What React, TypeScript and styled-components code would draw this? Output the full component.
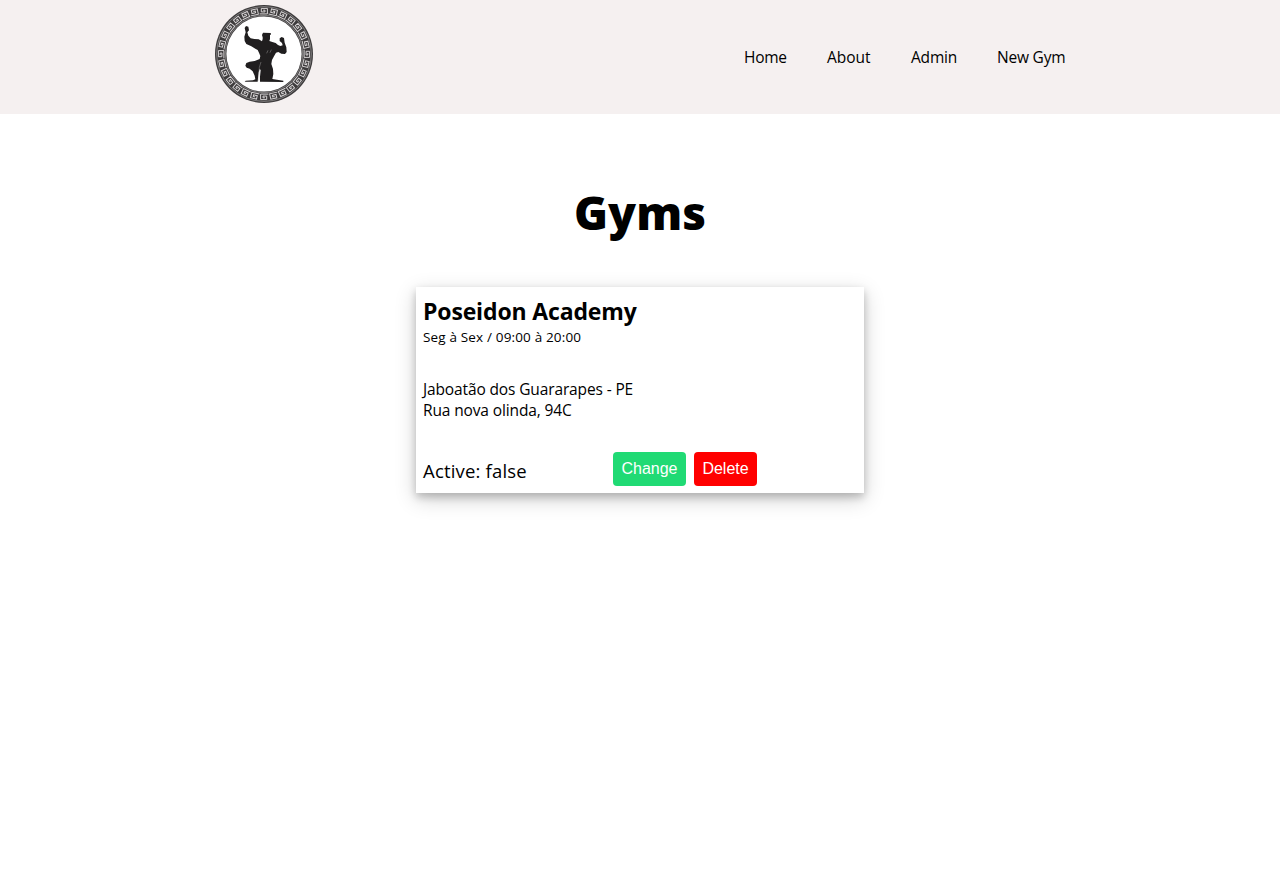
import React from "react";
import styled, { createGlobalStyle } from "styled-components";

const GlobalStyle = createGlobalStyle`
  * { box-sizing: border-box; margin: 0; padding: 0; }
  body { min-height: 100vh; background: #fff; color: #000; font-family: "Segoe UI", "Open Sans", "Noto Sans", sans-serif; }
`;

const Header = styled.header`
  height: 114px;
  background: #f5f0f0;
`;

const HeaderInner = styled.div`
  width: 850px;
  height: 100%;
  margin: 0 auto;
  display: flex;
  justify-content: space-between;
`;

const LogoArt = styled.svg`
  display: block;
  width: 98px;
  height: 100px;
  margin-top: 4px;
`;

const Nav = styled.nav`
  display: flex;
  align-items: center;
  gap: 40px;
`;

const NavLink = styled.a<{ $width: number; $spacing: number }>`
  width: ${(p) => p.$width}px;
  font-size: 15.5px;
  line-height: 22px;
  letter-spacing: ${(p) => p.$spacing}px;
  white-space: nowrap;
  color: #000;
  text-decoration: none;
`;

const Main = styled.main`
  min-height: calc(100vh - 114px);
  display: flex;
  flex-direction: column;
  align-items: center;
  padding-top: 66px;
`;

const Title = styled.h1`
  height: 64px;
  font-size: 46px;
  line-height: 64px;
  font-weight: 800;
  letter-spacing: 0;
`;

const Card = styled.article`
  width: 448px;
  height: 206px;
  margin-top: 43px;
  padding: 7px;
  display: flex;
  flex-direction: column;
  background: #fff;
  box-shadow: 0 4px 8px 0 rgba(0, 0, 0, 0.2), 0 6px 20px 0 rgba(0, 0, 0, 0.19);
`;

const GymName = styled.h2`
  font-size: 23px;
  line-height: 34px;
  font-weight: 700;
  letter-spacing: -0.15px;
`;

const Line = styled.p<{ $size: number; $height: number; $spacing?: number }>`
  font-size: ${(p) => p.$size}px;
  line-height: ${(p) => p.$height}px;
  letter-spacing: ${(p) => p.$spacing ?? 0}px;
  white-space: nowrap;
`;

const Address = styled.div`
  margin-top: 32px;
`;

const CardFooter = styled.footer`
  display: flex;
  align-items: flex-end;
  margin-top: auto;
`;

const Status = styled.div`
  width: 190px;
`;

const Actions = styled.div`
  display: flex;
  gap: 8px;
`;

const Button = styled.button<{ $color: string; $width: number }>`
  width: ${(p) => p.$width}px;
  height: 34px;
  border: 0;
  border-radius: 4px;
  background: ${(p) => p.$color};
  color: #fff;
  font: 16px/18px "Liberation Sans", Arial, sans-serif;
`;

const KEY_COUNT = 28;

function Logo() {
  return (
    <LogoArt viewBox="0 0 98 100" role="img" aria-label="Gym logo">
      <circle cx="49" cy="50" r="49" fill="#3d3b3c" />
      <circle cx="49" cy="50" r="47.4" fill="none" stroke="#aaa7a8" strokeWidth="0.6" />
      <circle cx="49" cy="50" r="38.7" fill="none" stroke="#aaa7a8" strokeWidth="0.6" />
      <g fill="none" stroke="#d6d3d4" strokeWidth="1">
        {Array.from({ length: KEY_COUNT }, (_, i) => (
          <path
            key={i}
            transform={`rotate(${(i * 360) / KEY_COUNT} 49 50)`}
            d="M44.6 9.9H52.4V4.4H46.3V7.9H50V6.2H48.1"
          />
        ))}
      </g>
      <circle cx="49" cy="50" r="37.6" fill="#fff" />
      <g transform="translate(-5 -4) scale(.33333)">
        <path
          fill="#201e1f"
          d="M104 84L108 78L115 80L117 91L112 97L115 107L122 115L133 117L146 118L156 124L158 117L158 112L156 105L159 98L182 99L183 103L180 106L180 117L178 123L187 126L197 129L204 135L211 138L218 136L216 129L209 123L209 115L215 111L222 114L224 128L229 142L230 156L225 162L214 161L205 156L198 158L192 169L186 180L184 192L189 207L190 222L187 237L201 239L220 242L220 246L150 245L150 230L152 210L149 207L146 217L144 235L143 245H104L107 242L129 241L136 238L134 227L128 214L119 206L110 203L106 197L109 189L119 185L134 183L149 177L151 168L147 158L143 150L136 146L124 139L109 132L104 123L103 110L107 97Z"
        />
        <g fill="none" stroke="#aaa8a9" strokeWidth="1.3">
          <path d="M153 186L148 202L146 242M174 151L170 160M184 149L180 158" />
        </g>
      </g>
    </LogoArt>
  );
}

export default function App() {
  return (
    <>
      <GlobalStyle />
      <Header>
        <HeaderInner>
          <Logo />
          <Nav>
            <NavLink $width={43} $spacing={-0.25}>Home</NavLink>
            <NavLink $width={44} $spacing={0}>About</NavLink>
            <NavLink $width={46} $spacing={-0.2}>Admin</NavLink>
            <NavLink $width={68} $spacing={-0.2}>New Gym</NavLink>
          </Nav>
        </HeaderInner>
      </Header>
      <Main>
        <Title>Gyms</Title>
        <Card>
          <GymName>Poseidon Academy</GymName>
          <Line $size={13.5} $height={19} $spacing={0.16}>Seg à Sex / 09:00 à 20:00</Line>
          <Address>
            <Line $size={15.5} $height={21} $spacing={-0.13}>Jaboatão dos Guararapes - PE</Line>
            <Line $size={15.5} $height={21} $spacing={-0.13}>Rua nova olinda, 94C</Line>
          </Address>
          <CardFooter>
            <Status>
              <Line $size={18.5} $height={30} $spacing={0.18}>Active: false</Line>
            </Status>
            <Actions>
              <Button $color="#20da74" $width={73}>Change</Button>
              <Button $color="#ff0000" $width={63}>Delete</Button>
            </Actions>
          </CardFooter>
        </Card>
      </Main>
    </>
  );
}
